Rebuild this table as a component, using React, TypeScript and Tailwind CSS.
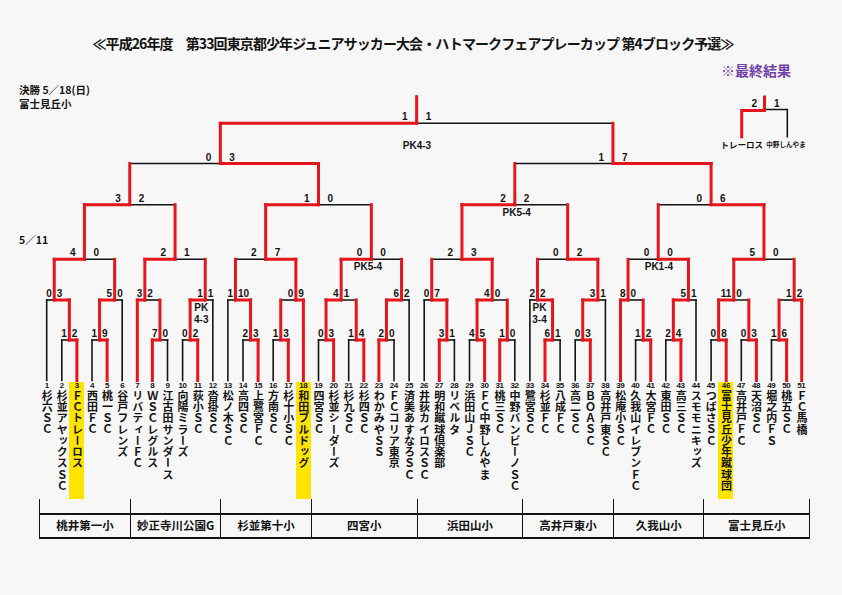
import React from "react";

// 左端チームの線の位置と半列幅
const X0 = 46.7;
const U = 7.55;
const LEAF_Y = 380.5;
const BAR: Record<number, number> = { 1: 340, 2: 300, 3: 259.3, 4: 204.7, 5: 163.5, 6: 123.3 };
const RED = "#e3161b";
const INK = "#141414";

type Team = { t: number };
type Match = { lv: number; k: number; a: Node; b: Node; s: [string, string]; w: 0 | 1 };
type Node = Team | Match;

const t = (n: number): Team => ({ t: n });
const m = (lv: number, k: number, a: Node, b: Node, s1: string, s2: string, w: "L" | "R"): Match => ({
  lv,
  k,
  a,
  b,
  s: [s1, s2],
  w: w === "L" ? 0 : 1,
});

const isTeam = (n: Node): n is Team => "t" in n;
const nx = (n: Node) => (isTeam(n) ? X0 + (n.t - 1) * 2 * U : X0 + n.k * U);
const ny = (n: Node) => (isTeam(n) ? LEAF_Y : BAR[n.lv]);

const S1 = m(3, 5, m(2, 1, t(1), m(1, 3, t(2), t(3), "1", "2", "R"), "0", "3", "R"), m(2, 9, m(1, 7, t(4), t(5), "1", "9", "R"), t(6), "5", "0", "L"), "4", "0", "L");
const S2 = m(3, 17, m(2, 13, t(7), m(1, 15, t(8), t(9), "7", "0", "L"), "3", "2", "L"), m(2, 21, m(1, 19, t(10), t(11), "0", "2", "R"), t(12), "1", "1", "L"), "2", "1", "L");
const S3 = m(3, 29, m(2, 25, t(13), m(1, 27, t(14), t(15), "2", "3", "R"), "1", "10", "R"), m(2, 33, m(1, 31, t(16), t(17), "1", "3", "R"), t(18), "0", "9", "R"), "2", "7", "R");
const S4 = m(3, 43, m(2, 39, m(1, 37, t(19), t(20), "0", "3", "R"), m(1, 41, t(21), t(22), "1", "4", "R"), "4", "1", "L"), m(2, 47, m(1, 45, t(23), t(24), "2", "0", "L"), t(25), "6", "2", "L"), "0", "0", "L");
const S5 = m(3, 55, m(2, 51, t(26), m(1, 53, t(27), t(28), "3", "1", "L"), "0", "7", "R"), m(2, 59, m(1, 57, t(29), t(30), "4", "5", "R"), m(1, 61, t(31), t(32), "1", "0", "L"), "4", "0", "L"), "2", "3", "R");
const S6 = m(3, 69, m(2, 65, t(33), m(1, 67, t(34), t(35), "6", "1", "L"), "2", "2", "R"), m(2, 73, m(1, 71, t(36), t(37), "0", "3", "R"), t(38), "3", "1", "L"), "0", "2", "R");
const S7 = m(3, 81, m(2, 77, t(39), m(1, 79, t(40), t(41), "1", "2", "R"), "8", "0", "L"), m(2, 85, m(1, 83, t(42), t(43), "2", "4", "R"), t(44), "5", "1", "L"), "0", "0", "R");
const S8 = m(3, 95, m(2, 91, m(1, 89, t(45), t(46), "0", "8", "R"), m(1, 93, t(47), t(48), "0", "3", "R"), "11", "0", "L"), m(2, 99, m(1, 97, t(49), t(50), "1", "6", "R"), t(51), "1", "2", "R"), "5", "0", "L");

const FINAL = m(
  6,
  49,
  m(5, 23, m(4, 11, S1, S2, "3", "2", "L"), m(4, 36, S3, S4, "1", "0", "L"), "0", "3", "R"),
  m(5, 75, m(4, 62, S5, S6, "2", "2", "L"), m(4, 88, S7, S8, "0", "6", "R"), "1", "7", "R"),
  "1",
  "1",
  "L"
);

type Seg = [number, number, number, number];
type Label = { x: number; y: number; s: string; anchor: "start" | "end" | "middle" };

function collect(root: Match) {
  const black: Seg[] = [];
  const red: Seg[] = [];
  const labels: Label[] = [];
  const walk = (mm: Match) => {
    const y = BAR[mm.lv];
    const cx = X0 + mm.k * U;
    [mm.a, mm.b].forEach((c, i) => {
      const x = nx(c);
      const isRed = !isTeam(c) || mm.w === i;
      (isRed ? red : black).push([x, ny(c), x, y]);
      if (!isTeam(c)) walk(c);
    });
    black.push([nx(mm.a), y, nx(mm.b), y]);
    red.push([nx(mm.w === 0 ? mm.a : mm.b), y, cx, y]);
    const off = mm.lv <= 2 ? 2.5 : 9;
    labels.push({ x: cx - off, y: y - 3, s: mm.s[0], anchor: "end" });
    labels.push({ x: cx + off, y: y - 3, s: mm.s[1], anchor: "start" });
  };
  walk(root);
  red.push([X0 + root.k * U, BAR[6], X0 + root.k * U, 96.7]);
  return { black, red, labels };
}

const PK: Label[] = [
  { x: 417, y: 148.5, s: "PK4-3", anchor: "middle" },
  { x: 201.3, y: 310.5, s: "PK", anchor: "middle" },
  { x: 201.3, y: 323, s: "4-3", anchor: "middle" },
  { x: 539.5, y: 310.5, s: "PK", anchor: "middle" },
  { x: 539.5, y: 323, s: "3-4", anchor: "middle" },
  { x: 368, y: 269.5, s: "PK5-4", anchor: "middle" },
  { x: 516.7, y: 216.3, s: "PK5-4", anchor: "middle" },
  { x: 658.9, y: 269.5, s: "PK1-4", anchor: "middle" },
];

const TEAMS = [
  "杉六ＳＣ", "杉並アヤックスＳＣ", "ＦＣトレーロス", "西田ＦＣ", "桃一ＳＣ", "谷戸フレンズ",
  "リバティーＦＣ", "ＷＳＣレグルス", "江古田サンダース", "向陽ミラーズ", "荻小ＳＣ", "沓掛ＳＣ",
  "松ノ木ＳＣ", "高四ＳＣ", "上鷺宮ＦＣ", "方南ＳＣ", "杉十小ＳＣ", "和田ブルドッグ",
  "四宮ＳＣ", "杉並シーダーズ", "杉九ＳＣ", "杉四ＳＣ", "わかみやＳＳ", "ＦＣコリア東京", "済美あすなろＳＣ",
  "井荻カイロスＳＣ", "明和蹴球倶楽部", "リベルタ", "浜田山ＪＳＣ", "ＦＣ中野しんやま", "桃三ＳＣ", "中野バンビーノＳＣ",
  "鷺宮ＳＣ", "杉並ＦＣ", "八成ＦＣ", "高二ＳＣ", "ＢＯＡＳＣ", "高井戸東ＳＣ",
  "松庵小ＳＣ", "久我山イレブンＦＣ", "大宮ＦＣ", "東田ＳＣ", "高三ＳＣ", "スモモニキッズ",
  "つばさＳＣ", "富士見丘少年蹴球団", "高井戸ＦＣ", "天沼ＳＣ", "堀之内ＦＳ", "桃五ＳＣ", "ＦＣ馬橋",
];
const PICKED = [3, 18, 46];

const VENUES: { name: string; wide: boolean }[] = [
  { name: "桃井第一小", wide: false },
  { name: "妙正寺川公園G", wide: false },
  { name: "杉並第十小", wide: false },
  { name: "四宮小", wide: true },
  { name: "浜田山小", wide: true },
  { name: "高井戸東小", wide: false },
  { name: "久我山小", wide: false },
  { name: "富士見丘小", wide: true },
];

function Bracket() {
  const { black, red, labels } = collect(FINAL);
  const txt = { fontFamily: "'Liberation Sans', Arial, sans-serif", fontWeight: 700, fontSize: 10, fill: INK };
  return (
    <svg className="[grid-area:1/1]" width={842} height={304} viewBox="0 78 842 304">
      <g stroke={INK} strokeWidth={1.6} strokeLinecap="square" fill="none">
        {black.map(([x1, y1, x2, y2], i) => (
          <line key={i} x1={x1} y1={y1} x2={x2} y2={y2} />
        ))}
        <polyline points="764.5,109.5 787.3,109.5 787.3,136.7" />
      </g>
      <g stroke={RED} strokeWidth={3} strokeLinecap="square" fill="none">
        {red.map(([x1, y1, x2, y2], i) => (
          <line key={i} x1={x1} y1={y1} x2={x2} y2={y2} />
        ))}
        <polyline points="741.7,136.7 741.7,110.5 764.5,110.5 764.5,97" />
      </g>
      <g {...txt}>
        {labels.concat(PK).map((l, i) => (
          <text key={i} x={l.x} y={l.y} textAnchor={l.anchor}>
            {l.s}
          </text>
        ))}
        <text x={757} y={107} textAnchor="end">2</text>
        <text x={774} y={107}>1</text>
      </g>
      <g fontFamily="'Noto Sans CJK JP', sans-serif" fontWeight={700} fill={INK} textAnchor="middle">
        <text x={741.7} y={147.5} fontSize={8.5}>トレーロス</text>
        <text x={786} y={147} fontSize={6.6}>中野しんやま</text>
      </g>
    </svg>
  );
}

export default function App() {
  return (
    <div className="w-[842px] h-[595px] overflow-hidden bg-[#f7f7f7] text-[#141414] font-['Liberation_Sans','Noto_Sans_CJK_JP',sans-serif]">
      <h1 className="pt-[35px] pr-[16px] text-center text-[14px] leading-[16px] font-bold tracking-[-0.9px] font-['Noto_Sans_CJK_JP',sans-serif]">
        ≪平成26年度　第33回東京都少年ジュニアサッカー大会・ハトマークフェアプレーカップ 第4ブロック予選≫
      </h1>
      <div className="mt-[11px] flex justify-end pr-[51px]">
        <span className="text-[14px] leading-[16px] font-bold text-[#7342aa] font-['Noto_Sans_CJK_JP',sans-serif]">※最終結果</span>
      </div>

      <div className="grid">
        <Bracket />
        <div className="[grid-area:1/1] self-start flex flex-col gap-[2px] pl-[19px] pt-[6px] text-[10.5px] leading-[11.5px] font-bold font-['Noto_Sans_CJK_JP',sans-serif]">
          <p>決勝 5／18(日)</p>
          <p>富士見丘小</p>
          <p className="mt-[123px]">5／11</p>
        </div>
      </div>

      {/* チーム名 */}
      <div className="ml-[39.15px] flex">
        {TEAMS.map((name, i) => (
          <div
            key={i}
            className={`w-[15.1px] h-[117px] flex flex-col items-center ${PICKED.includes(i + 1) ? "bg-[#ffe400]" : ""}`}
          >
            <span className="text-[8px] leading-[8px] font-bold tracking-[-0.4px]">{i + 1}</span>
            <span className="[writing-mode:vertical-rl] [text-orientation:upright] text-[11px] leading-[15px] tracking-[0.3px] font-bold font-['Noto_Sans_CJK_JP',sans-serif]">
              {name}
            </span>
          </div>
        ))}
      </div>

      {/* 会場 */}
      <div className="ml-[39.15px] flex w-fit border-l-[1.5px] border-[#141414]">
        {VENUES.map((v) => (
          <div
            key={v.name}
            className={`${v.wide ? "w-[105.7px]" : "w-[90.6px]"} flex flex-col border-r-[1.5px] border-[#141414]`}
          >
            <div className="h-[13.7px]" />
            <div className="h-[26.6px] flex items-center justify-center border-y-2 border-[#141414] text-[11.5px] font-bold font-['Noto_Sans_CJK_JP',sans-serif]">
              {v.name}
            </div>
          </div>
        ))}
      </div>
    </div>
  );
}
